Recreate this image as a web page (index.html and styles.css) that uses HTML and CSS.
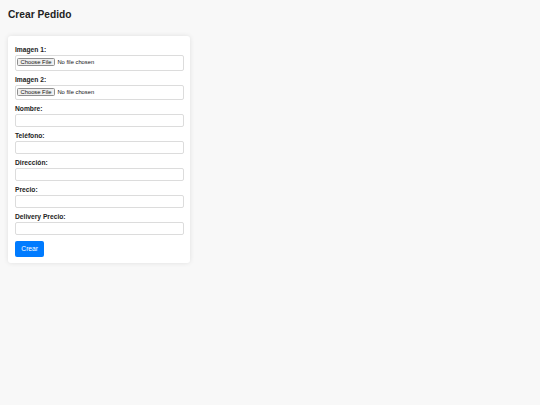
FILE: index.html
```html
<!DOCTYPE html>
<html lang="es">
<head>
<meta charset="utf-8">
<title>Crear Pedido</title>
<link rel="stylesheet" href="styles.css">
</head>
<body>
<h1 class="title">Crear Pedido</h1>
<form class="card">
  <div class="field">
    <label class="label" for="img1">Imagen 1:</label>
    <input class="file" type="file" id="img1">
  </div>
  <div class="field">
    <label class="label" for="img2">Imagen 2:</label>
    <input class="file" type="file" id="img2">
  </div>
  <div class="field">
    <label class="label" for="nombre">Nombre:</label>
    <input class="text" type="text" id="nombre">
  </div>
  <div class="field">
    <label class="label" for="tel">Teléfono:</label>
    <input class="text" type="text" id="tel">
  </div>
  <div class="field">
    <label class="label" for="dir">Dirección:</label>
    <input class="text" type="text" id="dir">
  </div>
  <div class="field">
    <label class="label" for="precio">Precio:</label>
    <input class="text" type="text" id="precio">
  </div>
  <div class="field">
    <label class="label" for="delivery">Delivery Precio:</label>
    <input class="text" type="text" id="delivery">
  </div>
  <button class="submit" type="submit">Crear</button>
</form>
</body>
</html>
```

FILE: styles.css
```css
html, body {
  margin: 0;
  padding: 0;
}
body {
  background: #f8f8f8;
  padding: 8px;
  font-family: "Liberation Sans", Arial, sans-serif;
  color: #222;
}
.title {
  margin: 0.5px 0 15px;
  font-size: 10.2px;
  line-height: 12px;
  font-weight: bold;
  color: #222;
}
.card {
  width: 182px;
  box-sizing: border-box;
  background: #fff;
  border-radius: 3px;
  box-shadow: 0 0 5px rgba(0, 0, 0, 0.1);
  padding: 10.5px 6.5px 6.5px 7px;
}
.field {
  margin-bottom: 5px;
}
.label {
  display: block;
  font-size: 6.7px;
  line-height: 8px;
  font-weight: bold;
  color: #222;
  margin-bottom: 1px;
}
.file,
.text {
  display: block;
  width: 100%;
  box-sizing: border-box;
  border: 1px solid #dcdcdc;
  border-radius: 2px;
  background: #fff;
  margin: 0;
}
.file {
  height: 15.5px;
  padding: 0 1px;
  font-family: "Liberation Sans", Arial, sans-serif;
  font-size: 5.8px;
  line-height: 13.5px;
  color: #111;
}
.file::file-selector-button {
  font: inherit;
  height: 8px;
  line-height: 6px;
  padding: 0 2.5px;
  margin: 0 2.5px 0 0;
  border: 0.5px solid #8f8f8f;
  border-radius: 1.5px;
  background: #efefef;
  color: #111;
  vertical-align: middle;
}
.text {
  height: 13px;
  padding: 0 3px;
  font-size: 6.7px;
}
.submit {
  display: block;
  margin-top: 5.5px;
  height: 16px;
  padding: 0 6.3px;
  border: none;
  border-radius: 2px;
  background: #007bff;
  color: #fff;
  font-family: "Liberation Sans", Arial, sans-serif;
  font-size: 6.7px;
}
```
